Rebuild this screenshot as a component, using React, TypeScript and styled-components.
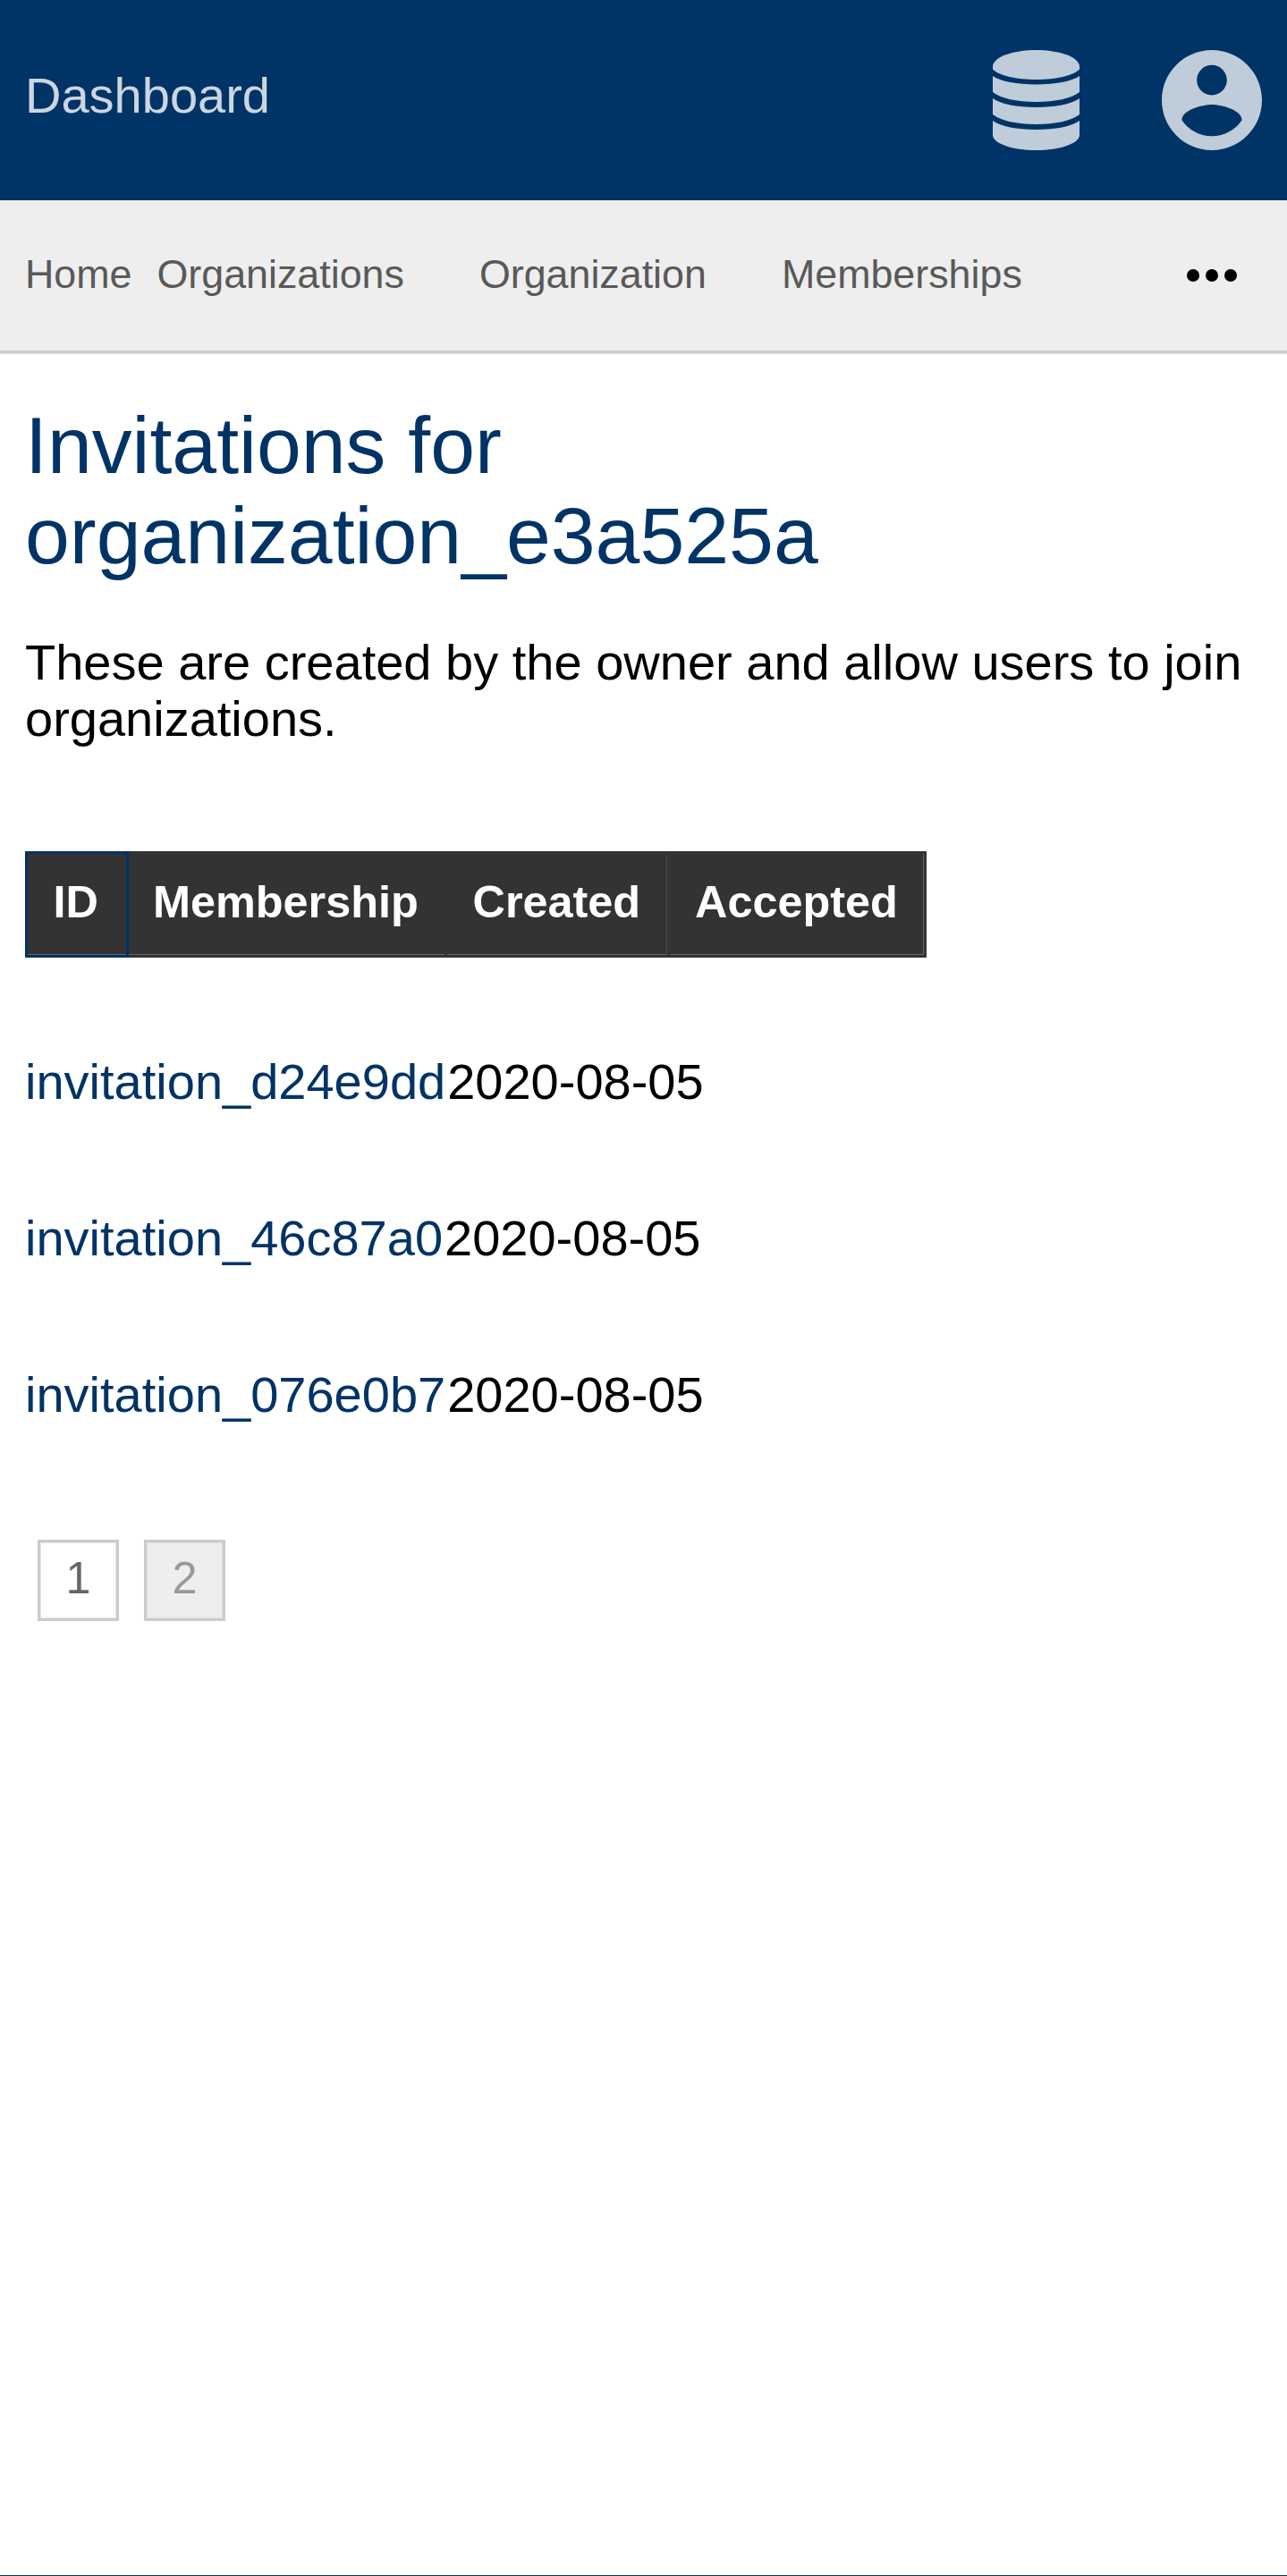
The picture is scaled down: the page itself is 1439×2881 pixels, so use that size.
import React from "react";
import styled, { createGlobalStyle } from "styled-components";

const GlobalStyle = createGlobalStyle`
  *, *::before, *::after { box-sizing: border-box; }
  html, body { margin: 0; padding: 0; background: #fff; }
  body { font-family: "Liberation Sans", Arial, sans-serif; font-size: 56px; color: #000; }
`;

const Page = styled.div`
  display: flex;
  flex-direction: column;
  height: 2881px;
  border-bottom: 1px solid #003366;
  overflow: hidden;
`;

const Header = styled.header`
  display: flex;
  flex: none;
  align-items: flex-start;
  justify-content: space-between;
  height: 224px;
  padding: 56px 28px 0;
  background: #003366;
`;

const Brand = styled.a`
  margin-top: 19px;
  line-height: 64px;
  color: #ccd6e0;
`;

const HeaderActions = styled.div`
  display: flex;
  gap: 92px;
  color: #bfccd9;

  svg { display: block; fill: currentColor; }
`;

const Nav = styled.nav`
  display: flex;
  flex: none;
  align-items: flex-start;
  height: 172px;
  padding: 56px 56px 0 28px;
  background: linear-gradient(#eee 168px, #ccc 168px, #ccc 171px, #ddd 171px);
  font-size: 44.8px;
  line-height: 52px;
`;

const NavLink = styled.a<{ $after: number }>`
  margin-right: ${(p) => p.$after}px;
  color: #595959;
`;

const MoreButton = styled.span`
  display: flex;
  margin: 21px 0 0 auto;
`;

const Main = styled.main`
  display: flex;
  flex-direction: column;
  align-items: flex-start;
  padding: 52px 28px 0;
`;

const Title = styled.h1`
  margin: 0;
  width: 1100px;
  font-size: 89.6px;
  font-weight: 400;
  line-height: 101px;
  color: #003366;
`;

const Intro = styled.p`
  margin: 59px 0 0;
  line-height: 63px;
`;

const TableHead = styled.div`
  display: grid;
  grid-template-columns: 116px 356px 249px 287px;
  height: 119px;
  margin-top: 117px;
  background: #333;
`;

const HeadCell = styled.div<{ $active?: boolean; $indent: number; $edge?: string }>`
  padding: 25px 0 0 ${(p) => p.$indent}px;
  border: 3px solid ${(p) => (p.$active ? "#003366" : "#333")};
  border-left-width: ${(p) => (p.$active ? 3 : 0)}px;
  box-shadow: inset 0 -1px 0 #666, inset -1px 0 0 ${(p) => p.$edge ?? "#333"};
  color: #fff;
  font-size: 50.4px;
  font-weight: 700;
  line-height: 58px;
`;

const Rows = styled.div`
  margin-top: 50px;
`;

const Row = styled.div`
  display: flex;
  gap: 2px;
  height: 175px;
  padding-top: 57px;
  line-height: 64px;
  white-space: nowrap;
`;

const RowLink = styled.a`
  color: #003366;
`;

const Pager = styled.div`
  display: flex;
  gap: 28px;
  margin: 76px 0 0 14px;
`;

const PageLink = styled.a<{ $current?: boolean }>`
  width: 91px;
  height: 91px;
  padding-top: 11px;
  border: 3px solid #ccc;
  box-shadow: inset 0 0 0 1px ${(p) => (p.$current ? "#ddd" : "#e5e5e5")};
  background: ${(p) => (p.$current ? "#eee" : "#fff")};
  color: ${(p) => (p.$current ? "#999" : "#666")};
  font-size: 50.4px;
  line-height: 58px;
  text-align: center;
`;

const navItems = [
  { label: "Home", after: 28 },
  { label: "Organizations", after: 84 },
  { label: "Organization", after: 84 },
  { label: "Memberships", after: 0 },
];

const columns = [
  { label: "ID", indent: 28.5, active: true },
  { label: "Membership", indent: 27 },
  { label: "Created", indent: 28.5, edge: "#4a4a4a" },
  { label: "Accepted", indent: 28, edge: "#666" },
];

const invitations = [
  { id: "invitation_d24e9dd", created: "2020-08-05" },
  { id: "invitation_46c87a0", created: "2020-08-05" },
  { id: "invitation_076e0b7", created: "2020-08-05" },
];

const DatabaseIcon = () => (
  <svg width="97" height="112" viewBox="0 0 97 112">
    <path d="M48.500 0C75 0 97 8 97 18.500V21.500C90 28.500 71 33 48.500 33S7 28.500 0 21.500V18.500C0 8 22 0 48.500 0Z" />
    <path d="M0 29C9 35 27 38.500 48.500 38.500S88 35 97 29V47C88 54 70 58 48.500 58S9 54 0 47Z" />
    <path d="M0 54C9 60.500 27 64 48.500 64S88 60.500 97 54V72C88 79 70 83 48.500 83S9 79 0 72Z" />
    <path d="M0 79C9 85.500 27 89 48.500 89S88 85.500 97 79V95C97 104.500 75 112 48.500 112S0 104.500 0 95Z" />
  </svg>
);

const AccountIcon = () => (
  <svg width="112" height="112" viewBox="2 2 20 20">
    <path d="M12 2C6.480 2 2 6.480 2 12s4.480 10 10 10 10-4.480 10-10S17.520 2 12 2zm0 3c1.660 0 3 1.340 3 3s-1.340 3-3 3-3-1.340-3-3 1.340-3 3-3zm0 14.200c-2.500 0-4.710-1.280-6-3.220.030-1.990 4-3.080 6-3.080 1.990 0 5.970 1.090 6 3.080-1.290 1.940-3.500 3.220-6 3.220z" />
  </svg>
);

const MoreIcon = () => (
  <svg width="56" height="14" viewBox="0 0 56 14">
    <circle cx="7" cy="7" r="7" />
    <circle cx="28" cy="7" r="7" />
    <circle cx="49" cy="7" r="7" />
  </svg>
);

export default function App() {
  return (
    <>
      <GlobalStyle />
      <Page>
        <Header>
          <Brand>Dashboard</Brand>
          <HeaderActions>
            <DatabaseIcon />
            <AccountIcon />
          </HeaderActions>
        </Header>
        <Nav>
          {navItems.map((item) => (
            <NavLink key={item.label} $after={item.after}>{item.label}</NavLink>
          ))}
          <MoreButton><MoreIcon /></MoreButton>
        </Nav>
        <Main>
          <Title>Invitations for organization_e3a525a</Title>
          <Intro>These are created by the owner and allow users to join organizations.</Intro>
          <TableHead>
            {columns.map((c) => (
              <HeadCell key={c.label} $active={c.active} $indent={c.indent} $edge={c.edge}>{c.label}</HeadCell>
            ))}
          </TableHead>
          <Rows>
            {invitations.map((row) => (
              <Row key={row.id}>
                <RowLink>{row.id}</RowLink>
                <span>{row.created}</span>
              </Row>
            ))}
          </Rows>
          <Pager>
            <PageLink>1</PageLink>
            <PageLink $current>2</PageLink>
          </Pager>
        </Main>
      </Page>
    </>
  );
}
